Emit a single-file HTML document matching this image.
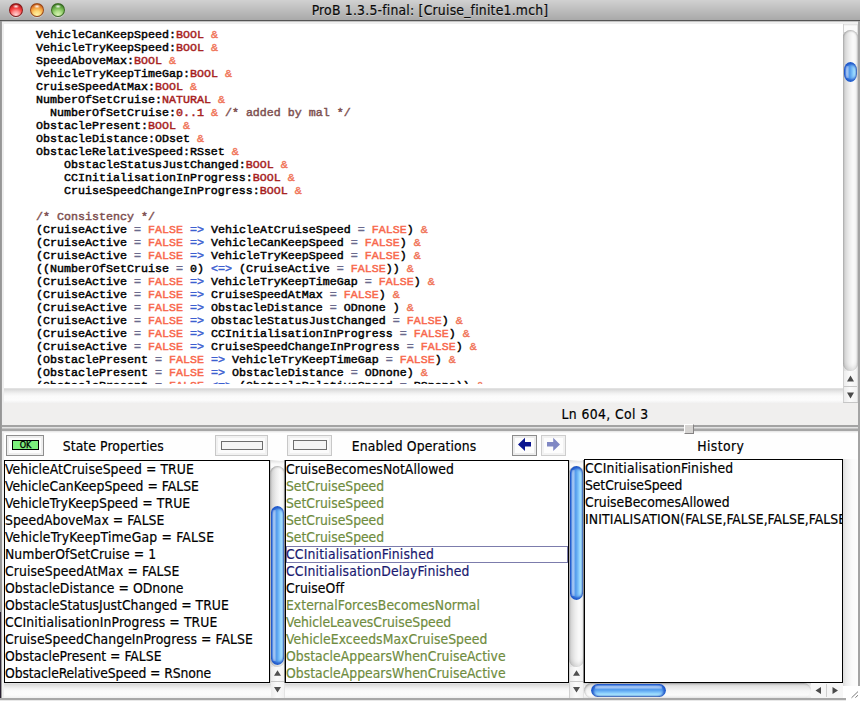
<!DOCTYPE html>
<html><head><meta charset="utf-8"><title>ProB 1.3.5-final: [Cruise_finite1.mch]</title>
<style>
html,body{margin:0;padding:0;}
body{width:860px;height:701px;overflow:hidden;background:#fff;position:relative;font-family:"DejaVu Sans Condensed","DejaVu Sans","Liberation Sans",sans-serif;font-size:13.8px;color:#000;-webkit-text-stroke:0.18px;}
.abs,#win div,#win span.abs{position:absolute;}
#win{position:absolute;left:0;top:0;width:860px;height:701px;overflow:hidden;background:#f3f2f1;}
/* title bar */
#tb{left:0;top:0;width:860px;height:20px;background:linear-gradient(#d1d1d1 0,#bdbdbd 50%,#a9a9a9 100%);border-bottom:1px solid #545454;}
#tb2{left:2px;top:21px;width:856px;height:3px;background:linear-gradient(#c2c2c2 0,#c2c2c2 1px,#efefef 1px);}
#title{left:0;top:2px;width:860px;text-align:center;font-size:13.8px;line-height:16px;color:#0a0a0a;text-shadow:0 1px 0 rgba(255,255,255,.35);letter-spacing:0.22px;}
.tl{top:3px;width:14px;height:14px;border-radius:7px;box-sizing:border-box;}
/* editor */
#ed{left:4px;top:24px;width:839px;height:364px;background:#fff;overflow:hidden;}
.ln{left:32px;white-space:pre;font-family:"Liberation Mono",monospace;font-weight:normal;-webkit-text-stroke:0.45px;font-size:11.667px;line-height:13px;height:13px;color:#000;}
.ln span{position:static;}
.c{color:#7e5050;} .t{color:#a61c1c;} .f{color:#f8684c;} .i{color:#3c5fd0;} .e{color:#6a6a8c;} .a{color:#f0765a;}
/* lists */
.lb{background:#fff;border:1px solid #000;box-sizing:border-box;overflow:hidden;}
.it{left:0px;white-space:pre;line-height:17px;height:17px;font-family:"DejaVu Sans Condensed","DejaVu Sans","Liberation Sans",sans-serif;font-size:13.8px;}
.selbox{left:0;width:282px;height:17px;border:1px solid #7c7cac;box-sizing:border-box;}
.g{color:#6f8c3e;} .n{color:#1a1a70;} .k{color:#000;}
.thv{border-radius:6.5px;background:linear-gradient(90deg,rgba(255,255,255,0) 1.3px,rgba(255,255,255,.52) 1.8px,rgba(255,255,255,.44) 4.3px,rgba(255,255,255,0) 4.8px) 0 4px/100% calc(100% - 8px) no-repeat,linear-gradient(90deg,#2a5cc8 0,#3f80e2 1.2px,#5096ea 4.5px,#5ea6f0 6.5px,#80c4fa 8.5px,#a2e2ff 10.2px,#aee8ff 11.3px,#86b4dc 12.1px,#7c8894 13px);box-shadow:inset 0 2.5px 2.5px rgba(26,78,196,.95),inset 0 -2.5px 2.5px rgba(26,78,196,.9);}
.thh{border-radius:6.5px;background:linear-gradient(rgba(255,255,255,0) 1.3px,rgba(255,255,255,.52) 1.8px,rgba(255,255,255,.44) 4.3px,rgba(255,255,255,0) 4.8px) 4px 0/calc(100% - 8px) 100% no-repeat,linear-gradient(#2a5cc8 0,#3f80e2 1.2px,#5096ea 4.5px,#5ea6f0 6.5px,#80c4fa 8.5px,#a2e2ff 10.2px,#aee8ff 11.3px,#86b4dc 12.1px,#7c8894 13px);box-shadow:inset 2.5px 0 2.5px rgba(26,78,196,.95),inset -2.5px 0 2.5px rgba(26,78,196,.9);}
.lbl{font-size:13.8px;line-height:16px;white-space:pre;}
</style></head><body>
<div id="win">
<div id="tb"></div><div id="tb2"></div>
<div class="tl" style="left:9px;background:radial-gradient(ellipse 3.2px 2px at 50% 20%,rgba(255,255,255,.95),rgba(255,255,255,0) 100%),radial-gradient(circle at 50% 90%,#ffd6d6 0%,#ff9090 30%,#f53e3e 55%,#c42222 78%,#7c1212 100%);border:1px solid rgba(120,24,24,.85);box-shadow:0 1px 0.5px rgba(255,255,255,.45);"></div>
<div class="tl" style="left:30px;background:radial-gradient(ellipse 3.2px 2px at 50% 20%,rgba(255,255,255,.95),rgba(255,255,255,0) 100%),radial-gradient(circle at 50% 90%,#fff2a8 0%,#fdd878 30%,#f6a644 55%,#d46e22 78%,#9c3c10 100%);border:1px solid rgba(140,60,20,.85);box-shadow:0 1px 0.5px rgba(255,255,255,.45);"></div>
<div class="tl" style="left:51px;background:radial-gradient(ellipse 3.2px 2px at 50% 20%,rgba(255,255,255,.95),rgba(255,255,255,0) 100%),radial-gradient(circle at 50% 90%,#daf4b4 0%,#aede88 30%,#78ba54 55%,#4c8c32 78%,#2a5a1a 100%);border:1px solid rgba(50,96,30,.85);box-shadow:0 1px 0.5px rgba(255,255,255,.45);"></div>
<div id="title">ProB 1.3.5-final: [Cruise_finite1.mch]</div>

<!-- window side borders -->
<div style="left:0;top:21px;width:1px;height:680px;background:#969696;"></div><div style="left:1px;top:21px;width:1px;height:680px;background:#9c9c9c;"></div><div style="left:0;top:612px;width:1px;height:89px;background:#2a2032;"></div>
<div style="left:2px;top:22px;width:2px;height:679px;background:#eeeeee;"></div>
<div style="left:858px;top:21px;width:2px;height:665px;background:#a4a4a4;"></div>

<!-- editor -->
<div id="ed"><div id="edc" style="left:0;top:0;width:839px;height:360px;overflow:hidden;">
<div class="ln" style="top:5px">VehicleCanKeepSpeed:<span class="t">BOOL</span> <span class="a">&amp;</span></div>
<div class="ln" style="top:18px">VehicleTryKeepSpeed:<span class="t">BOOL</span> <span class="a">&amp;</span></div>
<div class="ln" style="top:31px">SpeedAboveMax:<span class="t">BOOL</span> <span class="a">&amp;</span></div>
<div class="ln" style="top:44px">VehicleTryKeepTimeGap:<span class="t">BOOL</span> <span class="a">&amp;</span></div>
<div class="ln" style="top:57px">CruiseSpeedAtMax:<span class="t">BOOL</span> <span class="a">&amp;</span></div>
<div class="ln" style="top:70px">NumberOfSetCruise:<span class="t">NATURAL</span> <span class="a">&amp;</span></div>
<div class="ln" style="top:83px">  NumberOfSetCruise:<span class="t">0..1</span> <span class="a">&amp;</span> <span class="c">/* added by mal */</span></div>
<div class="ln" style="top:96px">ObstaclePresent:<span class="t">BOOL</span> <span class="a">&amp;</span></div>
<div class="ln" style="top:109px">ObstacleDistance:ODset <span class="a">&amp;</span></div>
<div class="ln" style="top:122px">ObstacleRelativeSpeed:RSset <span class="a">&amp;</span></div>
<div class="ln" style="top:135px">    ObstacleStatusJustChanged:<span class="t">BOOL</span> <span class="a">&amp;</span></div>
<div class="ln" style="top:148px">    CCInitialisationInProgress:<span class="t">BOOL</span> <span class="a">&amp;</span></div>
<div class="ln" style="top:161px">    CruiseSpeedChangeInProgress:<span class="t">BOOL</span> <span class="a">&amp;</span></div>
<div class="ln" style="top:187px"><span class="c">/* Consistency */</span></div>
<div class="ln" style="top:200px">(CruiseActive <span class="e">=</span> <span class="f">FALSE</span> <span class="i">=&gt;</span> VehicleAtCruiseSpeed <span class="e">=</span> <span class="f">FALSE</span>) <span class="a">&amp;</span></div>
<div class="ln" style="top:213px">(CruiseActive <span class="e">=</span> <span class="f">FALSE</span> <span class="i">=&gt;</span> VehicleCanKeepSpeed <span class="e">=</span> <span class="f">FALSE</span>) <span class="a">&amp;</span></div>
<div class="ln" style="top:226px">(CruiseActive <span class="e">=</span> <span class="f">FALSE</span> <span class="i">=&gt;</span> VehicleTryKeepSpeed <span class="e">=</span> <span class="f">FALSE</span>) <span class="a">&amp;</span></div>
<div class="ln" style="top:239px">((NumberOfSetCruise <span class="e">=</span> 0) <span class="i">&lt;=&gt;</span> (CruiseActive <span class="e">=</span> <span class="f">FALSE</span>)) <span class="a">&amp;</span></div>
<div class="ln" style="top:252px">(CruiseActive <span class="e">=</span> <span class="f">FALSE</span> <span class="i">=&gt;</span> VehicleTryKeepTimeGap <span class="e">=</span> <span class="f">FALSE</span>) <span class="a">&amp;</span></div>
<div class="ln" style="top:265px">(CruiseActive <span class="e">=</span> <span class="f">FALSE</span> <span class="i">=&gt;</span> CruiseSpeedAtMax <span class="e">=</span> <span class="f">FALSE</span>) <span class="a">&amp;</span></div>
<div class="ln" style="top:278px">(CruiseActive <span class="e">=</span> <span class="f">FALSE</span> <span class="i">=&gt;</span> ObstacleDistance <span class="e">=</span> ODnone ) <span class="a">&amp;</span></div>
<div class="ln" style="top:291px">(CruiseActive <span class="e">=</span> <span class="f">FALSE</span> <span class="i">=&gt;</span> ObstacleStatusJustChanged <span class="e">=</span> <span class="f">FALSE</span>) <span class="a">&amp;</span></div>
<div class="ln" style="top:304px">(CruiseActive <span class="e">=</span> <span class="f">FALSE</span> <span class="i">=&gt;</span> CCInitialisationInProgress <span class="e">=</span> <span class="f">FALSE</span>) <span class="a">&amp;</span></div>
<div class="ln" style="top:317px">(CruiseActive <span class="e">=</span> <span class="f">FALSE</span> <span class="i">=&gt;</span> CruiseSpeedChangeInProgress <span class="e">=</span> <span class="f">FALSE</span>) <span class="a">&amp;</span></div>
<div class="ln" style="top:330px">(ObstaclePresent <span class="e">=</span> <span class="f">FALSE</span> <span class="i">=&gt;</span> VehicleTryKeepTimeGap <span class="e">=</span> <span class="f">FALSE</span>) <span class="a">&amp;</span></div>
<div class="ln" style="top:343px">(ObstaclePresent <span class="e">=</span> <span class="f">FALSE</span> <span class="i">=&gt;</span> ObstacleDistance <span class="e">=</span> ODnone) <span class="a">&amp;</span></div>
<div class="ln" style="top:356px">(ObstaclePresent <span class="e">=</span> <span class="f">FALSE</span> <span class="i">&lt;=&gt;</span> (ObstacleRelativeSpeed <span class="e">=</span> RSnone)) <span class="a">&amp;</span></div>
</div></div>
<!-- editor v scrollbar -->
<div style="left:843px;top:24px;width:15px;height:379px;background:linear-gradient(90deg,#c4c4c4 0,#dedede 1px,#ececec 4px,#fafafa 9px,#fbfbfb 12px,#ececec 14px,#d0d0d0 15px);"></div>
<div style="left:844px;top:24px;width:13px;height:8px;background:linear-gradient(#dcdcdc,#fafafa 2px);"></div>
<div style="left:843px;top:30px;width:15px;height:341px;border-radius:7.5px;background:linear-gradient(90deg,#c0c0c0 0,#d6d6d6 2px,#ececec 6px,#fafafa 10px,#f4f4f4 13px,#d8d8d8 15px);box-shadow:inset 0 1px 2px rgba(0,0,0,.28),inset 0 -4px 4px -1px rgba(0,0,0,.10);"></div>
<div class="thv" style="left:844px;top:62px;width:13px;height:20px;border-radius:6.5px/8px;"></div>
<div style="left:844px;top:371px;width:13px;height:31px;background:linear-gradient(90deg,#ececec,#fbfbfb 6px,#f2f2f2);"></div><div style="left:843px;top:402px;width:15px;height:1px;background:#c6c6c6;"></div>
<div style="left:844px;top:386px;width:13px;height:1px;background:#c8c8c8;"></div>
<svg style="position:absolute;left:843px;top:371px" width="15" height="32"><path d="M4 10.5 L7.5 4.5 L11 10.5 Z M4 21.5 L7.5 27.5 L11 21.5 Z" fill="#4a4a4a"/></svg>
<!-- editor h scrollbar (empty) -->
<div style="left:4px;top:388px;width:839px;height:15px;background:linear-gradient(#e6e6e6 0,#dadada 1.5px,#e4e4e4 3px,#f2f2f2 5.5px,#fbfbfb 8px,#fcfcfc 12px,#f1f1f1 15px);"></div>
<!-- status -->
<div style="left:4px;top:403px;width:854px;height:22px;background:#f0efee;"></div>
<div class="lbl" style="left:561.5px;top:406px;letter-spacing:0.4px;">Ln 604, Col 3</div>
<!-- sash -->
<div style="left:2px;top:425px;width:856px;height:2px;background:#a3a3a3;"></div>
<div style="left:2px;top:427px;width:856px;height:1px;background:#e2e2e2;"></div>
<div style="left:2px;top:428px;width:856px;height:1px;background:#c4c4c4;"></div>
<div style="left:2px;top:429px;width:856px;height:2px;background:#a6a6a6;"></div>
<div style="left:2px;top:431px;width:856px;height:1px;background:#e9e9e9;z-index:2;"></div>
<div style="left:2px;top:432px;width:856px;height:1px;background:#f5f5f5;z-index:2;"></div>
<div style="left:684px;top:424px;width:10px;height:10px;background:#d6d4d2;border-top:1px solid #fff;border-left:1px solid #fff;border-right:1px solid #858383;border-bottom:1px solid #858383;box-sizing:border-box;z-index:3;"></div>

<!-- lower panel -->
<div style="left:4px;top:431px;width:854px;height:267px;background:#fefefe;"></div>
<!-- header buttons -->
<div style="left:6px;top:435px;width:38px;height:21px;border:1px solid #8e8e8e;background:#fdfdfd;box-shadow:inset 0 0 0 2px #eeeeee;box-sizing:border-box;"></div>
<div style="left:12px;top:440px;width:27px;height:10px;border:1px solid #000;background:#7df07d;box-sizing:border-box;font-size:9px;line-height:8px;text-align:center;-webkit-text-stroke:0.3px #000;">OK</div>
<div class="lbl" style="left:62.7px;top:438px;letter-spacing:0.1px;">State Properties</div>
<div style="left:215px;top:435px;width:53px;height:21px;border:1px solid #c8c8c8;background:#fbfbfb;box-shadow:inset 0 0 0 2px #f1f1f1;box-sizing:border-box;"></div>
<div style="left:221px;top:441px;width:42px;height:9px;border:1px solid #6e6e6e;background:#f5f5f5;box-sizing:border-box;"></div>
<div style="left:287px;top:435px;width:45px;height:21px;border:1px solid #c8c8c8;background:#fbfbfb;box-shadow:inset 0 0 0 2px #f1f1f1;box-sizing:border-box;"></div>
<div style="left:293px;top:440px;width:34px;height:10px;border:1px solid #6e6e6e;background:#f5f5f5;box-sizing:border-box;"></div>
<div class="lbl" style="left:351.7px;top:438px;letter-spacing:0.13px;">Enabled Operations</div>
<div style="left:512px;top:435px;width:25px;height:21px;border:1px solid #8c8c8c;background:#fdfdfd;box-shadow:inset 0 0 0 2px #ececec;box-sizing:border-box;"></div>
<svg style="position:absolute;left:512px;top:435px" width="25" height="21"><path d="M6 9.4 L13 2.8 L13 7 L19 7 L19 11.6 L13 11.6 L13 16 Z" fill="#0b1590"/></svg>
<div style="left:541px;top:435px;width:25px;height:21px;border:1px solid #cdcdcd;background:#fdfdfd;box-shadow:inset 0 0 0 2px #f2f2f2;box-sizing:border-box;"></div>
<svg style="position:absolute;left:541px;top:435px" width="25" height="21"><path d="M19 9.4 L12.2 2.8 L12.2 7 L6 7 L6 11.6 L12.2 11.6 L12.2 16 Z" fill="#8088c4"/></svg>
<div class="lbl" style="left:697.2px;top:438px;letter-spacing:0.42px;">History</div>

<!-- list 1 -->
<div class="lb" style="left:4px;top:460px;width:266px;height:223px;">
<div class="it" style="top:0px;letter-spacing:0.069px">VehicleAtCruiseSpeed = TRUE</div>
<div class="it" style="top:17px;letter-spacing:0.027px">VehicleCanKeepSpeed = FALSE</div>
<div class="it" style="top:34px;letter-spacing:0.076px">VehicleTryKeepSpeed = TRUE</div>
<div class="it" style="top:51px;letter-spacing:0.025px">SpeedAboveMax = FALSE</div>
<div class="it" style="top:68px;letter-spacing:0.193px">VehicleTryKeepTimeGap = FALSE</div>
<div class="it" style="top:85px;letter-spacing:0.07px">NumberOfSetCruise = 1</div>
<div class="it" style="top:102px;letter-spacing:0.096px">CruiseSpeedAtMax = FALSE</div>
<div class="it" style="top:119px;letter-spacing:0.046px">ObstacleDistance = ODnone</div>
<div class="it" style="top:136px">ObstacleStatusJustChanged = TRUE</div>
<div class="it" style="top:153px;letter-spacing:0.112px">CCInitialisationInProgress = TRUE</div>
<div class="it" style="top:170px;letter-spacing:0.071px">CruiseSpeedChangeInProgress = FALSE</div>
<div class="it" style="top:187px;letter-spacing:0.009px">ObstaclePresent = FALSE</div>
<div class="it" style="top:204px;letter-spacing:-0.103px">ObstacleRelativeSpeed = RSnone</div>
</div>
<!-- scrollbar 1 -->
<div style="left:270px;top:460px;width:15px;height:238px;background:linear-gradient(90deg,#c4c4c4 0,#dedede 1px,#ececec 4px,#fafafa 9px,#fbfbfb 12px,#ececec 14px,#dcdcdc 15px);"></div>
<div style="left:284px;top:460px;width:1px;height:223px;background:#8a8a8a;z-index:2;"></div>
<div style="left:271px;top:461px;width:13px;height:8px;background:linear-gradient(#e4e4e4,#fafafa 3px);"></div>
<div style="left:270px;top:466px;width:15px;height:201px;border-radius:7.5px;background:linear-gradient(90deg,#c0c0c0 0,#d6d6d6 2px,#ececec 6px,#fafafa 10px,#f4f4f4 13px,#d8d8d8 15px);box-shadow:inset 0 1px 2px rgba(0,0,0,.28),inset 0 -4px 4px -1px rgba(0,0,0,.10);"></div>
<div class="thv" style="left:271px;top:506px;width:13px;height:159px;"></div>
<div style="left:271px;top:667px;width:13px;height:31px;background:linear-gradient(90deg,#ececec,#fbfbfb 6px,#f2f2f2);"></div>
<div style="left:271px;top:681px;width:13px;height:1px;background:#c8c8c8;"></div>
<svg style="position:absolute;left:270px;top:666px" width="15" height="32"><path d="M4 9.8 L7.5 4.2 L11 9.8 Z M4 21 L7.5 26.4 L11 21 Z" fill="#505050"/></svg>
<!-- below list 1: empty h scrollbar -->
<div style="left:4px;top:683px;width:267px;height:15px;background:linear-gradient(#e6e6e6 0,#dadada 1.5px,#e4e4e4 3px,#f2f2f2 5.5px,#fbfbfb 8px,#fcfcfc 12px,#f1f1f1 15px);"></div>

<!-- list 2 -->
<div class="lb" style="left:285px;top:460px;width:284px;height:223px;">
<div class="it k" style="top:0px;letter-spacing:0.073px">CruiseBecomesNotAllowed</div>
<div class="it g" style="top:17px;letter-spacing:-0.031px">SetCruiseSpeed</div>
<div class="it g" style="top:34px;letter-spacing:-0.031px">SetCruiseSpeed</div>
<div class="it g" style="top:51px;letter-spacing:-0.031px">SetCruiseSpeed</div>
<div class="it g" style="top:68px;letter-spacing:-0.031px">SetCruiseSpeed</div>
<div class="selbox" style="top:85px"></div><div class="it n" style="top:85px;letter-spacing:0.178px">CCInitialisationFinished</div>
<div class="it n" style="top:102px;letter-spacing:0.143px">CCInitialisationDelayFinished</div>
<div class="it k" style="top:119px;letter-spacing:0.062px">CruiseOff</div>
<div class="it g" style="top:136px;letter-spacing:0.03px">ExternalForcesBecomesNormal</div>
<div class="it g" style="top:153px;letter-spacing:-0.026px">VehicleLeavesCruiseSpeed</div>
<div class="it g" style="top:170px;letter-spacing:0.07px">VehicleExceedsMaxCruiseSpeed</div>
<div class="it g" style="top:187px;letter-spacing:0.027px">ObstacleAppearsWhenCruiseActive</div>
<div class="it g" style="top:204px;letter-spacing:0.027px">ObstacleAppearsWhenCruiseActive</div>
</div>
<div style="left:285px;top:683px;width:286px;height:15px;background:linear-gradient(#e6e6e6 0,#dadada 1.5px,#e4e4e4 3px,#f2f2f2 5.5px,#fbfbfb 8px,#fcfcfc 12px,#f1f1f1 15px);"></div>
<!-- scrollbar 2 -->
<div style="left:569px;top:460px;width:15px;height:238px;background:linear-gradient(90deg,#c4c4c4 0,#dedede 1px,#ececec 4px,#fafafa 9px,#fbfbfb 12px,#ececec 14px,#dcdcdc 15px);"></div>
<div style="left:583px;top:460px;width:1px;height:223px;background:#8a8a8a;z-index:2;"></div>
<div style="left:570px;top:461px;width:13px;height:8px;background:linear-gradient(#e4e4e4,#fafafa 3px);"></div>
<div style="left:569px;top:466px;width:15px;height:201px;border-radius:7.5px;background:linear-gradient(90deg,#c0c0c0 0,#d6d6d6 2px,#ececec 6px,#fafafa 10px,#f4f4f4 13px,#d8d8d8 15px);box-shadow:inset 0 1px 2px rgba(0,0,0,.28),inset 0 -4px 4px -1px rgba(0,0,0,.10);"></div>
<div class="thv" style="left:570px;top:466px;width:13px;height:134px;"></div>
<div style="left:570px;top:667px;width:13px;height:31px;background:linear-gradient(90deg,#ececec,#fbfbfb 6px,#f2f2f2);"></div>
<div style="left:570px;top:681px;width:13px;height:1px;background:#c8c8c8;"></div>
<svg style="position:absolute;left:569px;top:666px" width="15" height="32"><path d="M4 9.8 L7.5 4.2 L11 9.8 Z M4 21 L7.5 26.4 L11 21 Z" fill="#505050"/></svg>

<!-- list 3 -->
<div class="lb" style="left:584px;top:459px;width:259px;height:224px;">
<div class="it" style="top:0px;letter-spacing:0.196px">CCInitialisationFinished</div>
<div class="it" style="top:17px;letter-spacing:-0.077px">SetCruiseSpeed</div>
<div class="it" style="top:34px">CruiseBecomesAllowed</div>
<div class="it" style="top:51px"><span style="position:static;letter-spacing:0.17px">INITIALISATION(</span><span style="position:static;letter-spacing:0.05px">FALSE,FALSE,FALSE,FALSE,FALSE,FALSE</span></div>
</div>
<!-- h scrollbar 3 -->
<div style="left:584px;top:683px;width:259px;height:15px;background:linear-gradient(#d0d0d0 0,#e8e8e8 2px,#fafafa 7px,#f6f6f6 13px,#e6e6e6 15px);"></div>
<div style="left:584px;top:683px;width:227px;height:15px;border-radius:7.5px;background:linear-gradient(#cfcfcf 0,#e4e4e4 3px,#f6f6f6 8px,#fbfbfb 12px,#e8e8e8 15px);box-shadow:inset 1px 1px 2px rgba(0,0,0,.25);"></div>
<div class="thh" style="left:591px;top:684px;width:75px;height:13px;"></div>
<div style="left:811px;top:683px;width:32px;height:15px;background:#f6f6f6;"></div>
<div style="left:826px;top:684px;width:1px;height:13px;background:#cfcfcf;"></div>
<svg style="position:absolute;left:811px;top:683px" width="32" height="15"><path d="M10 4 L4.5 7.5 L10 11 Z M21.5 4 L27 7.5 L21.5 11 Z" fill="#4a4a4a"/></svg>
<!-- v scrollbar 3 (empty) -->
<div style="left:843px;top:459px;width:15px;height:227px;background:linear-gradient(90deg,#dcdcdc 0,#ececec 3px,#fafafa 9px,#fdfdfd 15px);"></div>
<!-- grip -->
<div style="left:843px;top:686px;width:17px;height:15px;background:#fff;"></div>
<svg style="position:absolute;left:845px;top:686px" width="15" height="15"><path d="M6.5 11.8 L13 5.6 M10.4 11.6 L13 9.2" stroke="#6e6e6e" stroke-width="0.9" fill="none"/></svg>
<!-- bottom line -->
<div style="left:0;top:698px;width:846px;height:2px;background:#a8a8a8;"></div>
<div style="left:0;top:700px;width:846px;height:1px;background:#e8e8e8;"></div>
</div>
</body></html>
